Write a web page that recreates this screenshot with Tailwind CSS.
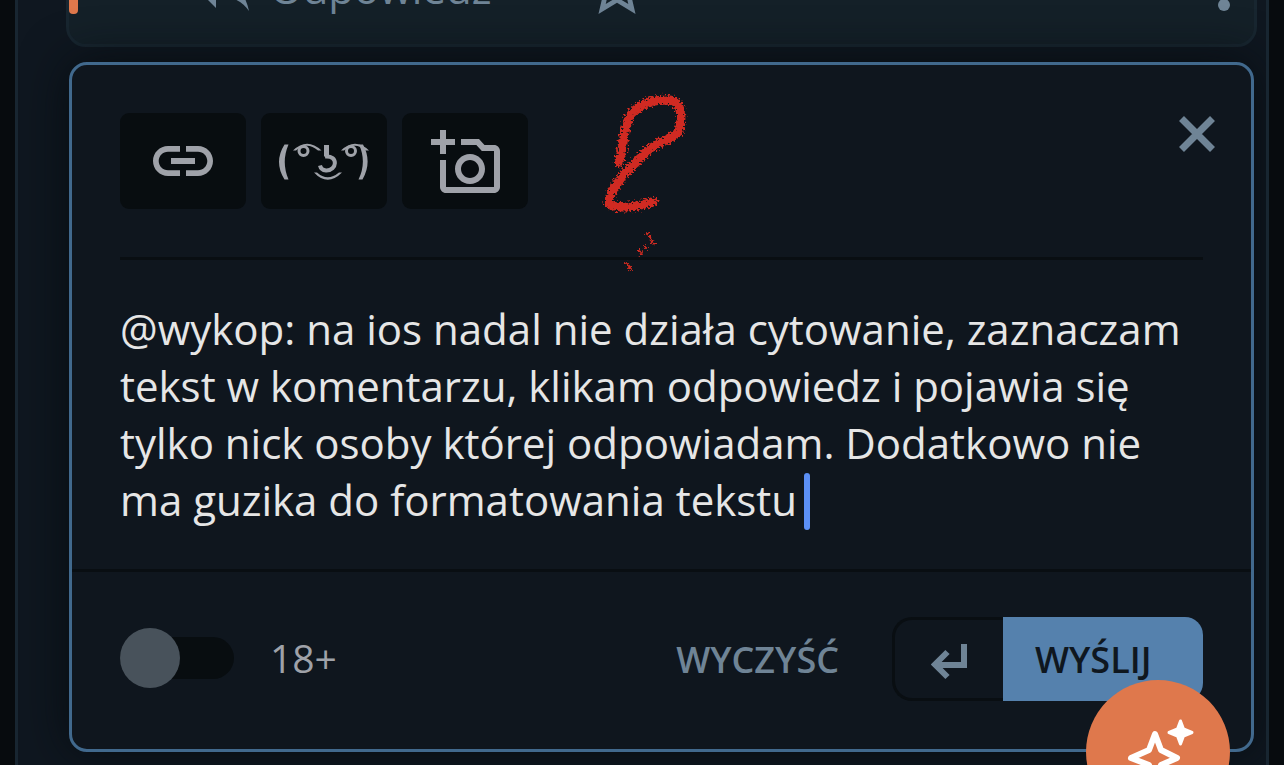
<!DOCTYPE html>
<html lang="pl">
<head>
<meta charset="utf-8">
<meta name="viewport" content="width=device-width, initial-scale=1">
<title>Odpowiedz</title>
<script src="https://cdn.jsdelivr.net/npm/@tailwindcss/browser@4"></script>
</head>
<body class="bg-[#070b0e] font-['Open_Sans','Noto_Sans',sans-serif] text-[42px] leading-[57px] overflow-hidden">
<main class="relative mx-[15px] h-screen overflow-hidden border-x-3 border-[#182631] bg-[#0f1720]">
  <article class="-mt-16 mr-[9px] ml-12 flex rounded-[20px] border-3 border-[#182630] bg-[#142028]">
    <div class="mb-[30px] w-[9px] rounded-b bg-[#df784c]"></div>
    <div class="flex grow items-center pt-3 pr-3 pb-[21px] pl-[108px] text-[#6f8496]">
      <button class="flex items-center gap-3">
        <svg class="size-[72px]" viewBox="0 0 24 24" fill="currentColor" aria-hidden="true"><path d="M10 9V5l-7 7 7 7v-4.1c5 0 8.5 1.6 11 5.1-1-5-4-10-11-11z"/></svg>
        <span>Odpowiedz</span>
      </button>
      <button class="ml-[90px]" aria-label="Ulubione">
        <svg class="size-[72px]" viewBox="0 0 24 24" fill="currentColor"><path d="M22 9.24l-7.19-.62L12 2 9.19 8.63 2 9.24l5.46 4.73L5.82 21 12 17.27 18.18 21l-1.63-7.03L22 9.24zM12 15.4l-3.76 2.27 1-4.28-3.32-2.88 4.38-.38L12 6.1l1.71 4.04 4.38.38-3.32 2.88 1 4.28L12 15.4z"/></svg>
      </button>
      <button class="ml-auto" aria-label="Więcej">
        <svg class="h-[72px] w-9" viewBox="6 0 12 24" fill="currentColor"><circle cx="12" cy="6" r="2"/><circle cx="12" cy="12" r="2"/><circle cx="12" cy="18" r="2"/></svg>
      </button>
    </div>
  </article>

  <form class="relative mt-[15px] mr-3 ml-[51px] rounded-[18px] border-3 border-[#41698d] bg-[#0f161e] shadow-[0_0_48px_rgba(7,11,14,0.9)]" onsubmit="return false">
    <div class="px-12 pt-12">
      <div class="flex items-start gap-[15px] border-b-3 border-[#090e12] pb-12 text-[#9fa2a9]">
        <button type="button" aria-label="Link" class="flex h-24 w-[126px] items-center justify-center rounded-[9px] bg-[#080d10]">
          <svg class="size-[72px]" viewBox="0 0 24 24" fill="currentColor"><path d="M3.9 12c0-1.71 1.39-3.1 3.1-3.1h4V7H7c-2.76 0-5 2.24-5 5s2.24 5 5 5h4v-1.9H7c-1.71 0-3.1-1.39-3.1-3.1zM8 13h8v-2H8v2zm9-6h-4v1.9h4c1.71 0 3.1 1.39 3.1 3.1s-1.39 3.1-3.1 3.1h-4V17h4c2.76 0 5-2.24 5-5s-2.24-5-5-5z"/></svg>
        </button>
        <button type="button" aria-label="Buźka" class="flex h-24 w-[126px] items-center justify-center rounded-[9px] bg-[#080d10]">
          <svg class="h-10 w-[90px]" viewBox="0 0 90 40" fill="none" stroke="currentColor">
            <path fill="currentColor" stroke="none" d="M5.500 3.500H9.500Q2 21 9.500 38.500H5.500Q-5.500 21 5.500 3.500zM84 3.500H80Q88 21 79.500 38.500H83.500Q93.500 21 84 3.500z"/>
            <path fill="currentColor" stroke="none" d="M14 9.500Q28-4 42.500 9.500H39Q28 0 17 9.500zM62 9.500Q76-4 90 9.500H86.500Q76 0 65 9.500zM35 31.500Q48.500 46 63 31.500H60Q48.500 41 38 31.500z"/>
            <circle cx="24.500" cy="10" r="4.500" stroke-width="3"/><circle cx="72" cy="10" r="4.500" stroke-width="3"/>
            <path stroke-width="5" d="M47.500 4V15.500"/><path stroke-width="4" d="M46 15.500C60 14 58 30 47 29.500Q42 29 41 24.500"/>
          </svg>
        </button>
        <button type="button" aria-label="Dodaj zdjęcie" class="flex h-24 w-[126px] items-center justify-center rounded-[9px] bg-[#080d10] pt-1 pl-1">
          <svg class="size-[72px]" viewBox="0 0 24 24" fill="currentColor"><path d="M21 6h-3.170L16 4h-6v2h5.120l1.830 2H21v12H5v-9H3v9c0 1.100.9 2 2 2h16c1.100 0 2-.9 2-2V8c0-1.100-.9-2-2-2zM8 14c0 2.760 2.240 5 5 5s5-2.240 5-5-2.240-5-5-5-5 2.240-5 5zm5-3c1.650 0 3 1.350 3 3s-1.350 3-3 3-3-1.350-3-3 1.350-3 3-3zM5 6h3V4H5V1H3v3H0v2h3v3h2z"/></svg>
        </button>
        <button type="button" aria-label="Zamknij" class="-mr-3 ml-auto pt-[3px] text-[#6f8496]">
          <svg class="size-9" viewBox="0 0 36 36" fill="none" stroke="currentColor" stroke-width="7"><path d="M2.500 2.500l31 31M33.500 2.500l-31 31"/></svg>
        </button>
      </div>
      <div class="relative pt-10 pb-[41px]">
        <textarea rows="4" aria-label="Treść komentarza" spellcheck="false" class="block w-full resize-none overflow-hidden bg-transparent text-[#e6e6e6] outline-none">@wykop: na ios nadal nie działa cytowanie, zaznaczam tekst w komentarzu, klikam odpowiedz i pojawia się tylko nick osoby której odpowiadam. Dodatkowo nie ma guzika do formatowania tekstu</textarea>
        <span class="absolute bottom-[39px] left-[684px] h-[57px] w-1.5 rounded-full bg-[#5b8ff5]"></span>
      </div>
    </div>
    <div class="flex items-center border-t-3 border-[#090e12] px-12 pt-[45px] pb-12">
      <label class="flex items-center gap-9 pb-0.5 text-[39px] text-[#9fa2a9]">
        <input type="checkbox" class="relative h-[42px] w-[114px] appearance-none rounded-full bg-[#080d10] before:absolute before:-top-[9px] before:left-0 before:size-[60px] before:rounded-full before:bg-[#48525b]">
        <span class="pb-0.5">18+</span>
      </label>
      <button type="reset" class="mr-[53px] ml-auto text-[36px] font-semibold text-[#6f8496]">WYCZYŚĆ</button>
      <button type="button" aria-label="Nowa linia" class="flex h-[84px] w-[111px] items-center justify-center rounded-l-[20px] border-3 border-r-0 border-[#090e12] pt-1.5 text-[#6f8496]">
        <svg class="size-9" viewBox="0 0 36 36" fill="none" stroke="currentColor" stroke-width="6"><path d="M33 0v21H5M16.500 8L4 20.500 16.500 33"/></svg>
      </button>
      <button type="submit" class="h-[84px] w-[200px] rounded-r-[18px] bg-[#5581ad] pl-8 text-left text-[36px] font-semibold text-[#0f171f]">WYŚLIJ</button>
    </div>

    <!-- hand-drawn marker stroke -->
    <svg class="pointer-events-none absolute top-[15px] left-[518px] h-[200px] w-[120px]" viewBox="0 0 120 200" fill="none" stroke="#d02c20" stroke-linecap="round" stroke-linejoin="round" aria-hidden="true">
      <filter id="rough" x="-20%" y="-20%" width="140%" height="140%"><feTurbulence type="fractalNoise" baseFrequency="0.5" numOctaves="2" seed="4"/><feDisplacementMap in="SourceGraphic" scale="10" xChannelSelector="R" yChannelSelector="G"/></filter>
      <g filter="url(#rough)">
        <path stroke-width="9" d="M29 82C34 66 34 40 43 32C52 23 62 20 80 20C91 21 93 37 89 51C82 61 66 62 57 71C46 84 35 90 27 104C21 112 18 118 19 124C28 130 45 127 63 122"/>
        <path stroke-width="2" d="M57 153l3 4 2 6 4 1M54 166l2 2M49 169l2 5M36 183l4 4M38 186l3 3"/>
      </g>
    </svg>
  </form>
</main>

<button aria-label="Nowości" class="fixed top-[680px] right-[54px] flex size-36 items-center justify-center rounded-full bg-[#df784c] text-white">
  <svg class="size-[72px]" viewBox="0 0 72 72" fill="none" stroke="currentColor" stroke-width="6" stroke-linejoin="round" aria-hidden="true"><path d="M33 18l6 16L55 42 39 49 33 65 27 49 9 42 27 34z"/><path fill="currentColor" stroke-width="3" d="M58.500 5l3 8 8.500 3.500-8.500 3.500-3 8-3-8-8.500-3.500 8.500-3.500z"/></svg>
</button>
</body>
</html>
